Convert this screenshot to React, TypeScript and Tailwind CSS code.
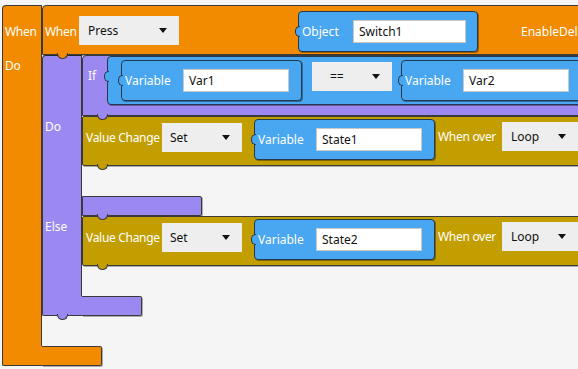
import React from "react";

const OR = "bg-[#f38b00]";
const PU = "bg-[#9b88f0]";
const BL = "bg-[#49a6f1]";
const MU = "bg-[#c39e00]";

function Caret() {
  return (
    <svg width="8" height="5" viewBox="0 0 8 5" className="shrink-0">
      <path d="M0 0H8L4 5Z" fill="#111" />
    </svg>
  );
}

function Dropdown({ label, cls }: { label: string; cls: string }) {
  return (
    <div className={`flex items-center justify-between h-[29px] bg-[#eeeeee] text-[#111] pr-[12px] shrink-0 ${cls}`}>
      <span>{label}</span>
      <Caret />
    </div>
  );
}

function Input({ value, cls }: { value: string; cls: string }) {
  return (
    <div className={`h-[23px] bg-white border border-[#c8c8c8] pl-[5px] flex items-center text-[#111] shrink-0 ${cls}`}>
      {value}
    </div>
  );
}

function LeftBump({ bg, border }: { bg: string; border: string }) {
  return (
    <div className={`absolute right-full top-[14px] -mr-[1px] w-[5px] h-[11px] rounded-l-full border border-r-0 z-10 ${bg} ${border}`} />
  );
}

function BottomBump({ bg, left }: { bg: string; left: string }) {
  return (
    <div className={`absolute top-full -mt-[1px] w-[11px] h-[6px] rounded-b-full border border-t-0 border-[#3a3a3a] z-10 ${bg} ${left}`} />
  );
}

function VariableBlock({ value, cls }: { value: string; cls: string }) {
  return (
    <div className={`relative flex items-center w-[181px] h-[41px] ${BL} border border-[#25384d] rounded-[4px] pl-[3px] shadow-[1px_1px_0_rgba(0,0,0,0.35)] shrink-0 ${cls}`}>
      <LeftBump bg={BL} border="border-[#25384d]" />
      <span className="w-[58px] shrink-0 text-white whitespace-nowrap">Variable</span>
      <Input value={value} cls="w-[106px]" />
    </div>
  );
}

function ValueChange({ state }: { state: string }) {
  return (
    <div className={`relative flex items-start w-[540px] h-[50px] ${MU} border border-[#3a3a3a] rounded-[2px] pl-[3px] shadow-[1px_1px_0_rgba(0,0,0,0.3)]`}>
      <span className="w-[76px] shrink-0 mt-[13px] text-white leading-[16px] whitespace-nowrap tracking-[-0.3px]">Value Change</span>
      <Dropdown label="Set" cls="w-[80px] pl-[8px] mt-[6px]" />
      <VariableBlock value={state} cls="ml-[12px] mt-[2px]" />
      <span className="ml-[3px] w-[64px] shrink-0 mt-[12px] text-white leading-[16px] whitespace-nowrap tracking-[-0.3px]">When over</span>
      <Dropdown label="Loop" cls="w-[76px] pl-[9px] mt-[5px]" />
      <BottomBump bg={MU} left="left-[14px]" />
    </div>
  );
}

export default function App() {
  return (
    <div className="w-[578px] h-[369px] overflow-hidden bg-[#f5f5f5] pl-[2px] pt-[5px] text-[12px] font-['Noto_Sans','Open_Sans',sans-serif] leading-[16px]">
      <div className="flex flex-col w-max">
        <div className="flex">
          {/* Outer orange column */}
          <div className={`w-[40px] ${OR} border-l border-t border-r border-[#3a3a3a] rounded-tl-[4px] flex flex-col text-white pl-[2px] tracking-[-0.3px]`}>
            <span className="mt-[18px]">When</span>
            <span className="mt-[18px]">Do</span>
          </div>
          <div className="flex flex-col pb-[30px]">
            {/* Top trigger bar */}
            <div className={`relative flex items-start w-[600px] h-[50px] ${OR} border border-[#3a3a3a] rounded-tl-[4px] pl-[2px] shadow-[1px_1px_0_rgba(0,0,0,0.3)]`}>
              <span className="w-[34px] shrink-0 mt-[18px] text-white tracking-[-0.3px]">When</span>
              <Dropdown label="Press" cls="w-[100px] pl-[9px] mt-[10px]" />
              <div className={`relative ml-[119px] mt-[5px] flex items-center w-[180px] h-[41px] shrink-0 ${BL} border border-[#25384d] rounded-[4px] pl-[3px] shadow-[1px_1px_0_rgba(0,0,0,0.35)]`}>
                <LeftBump bg={BL} border="border-[#25384d]" />
                <span className="w-[51px] shrink-0 text-white">Object</span>
                <Input value="Switch1" cls="w-[113px]" />
              </div>
              <span className="ml-[43px] mt-[18px] text-white whitespace-nowrap">EnableDelay</span>
              <BottomBump bg={OR} left="left-[14px]" />
            </div>

            {/* Purple If block */}
            <div className="flex flex-col">
              <div className="flex">
                <div className={`w-[40px] ${PU} border-l border-t border-r border-[#3a3a3a] rounded-tl-[4px] flex flex-col text-white pl-[2px]`}>
                  <span className="mt-[63px]">Do</span>
                  <span className="mt-[84px]">Else</span>
                </div>
                <div className="flex flex-col pb-[30px]">
                  {/* If row */}
                  <div className={`relative flex items-start w-[540px] h-[61px] ${PU} border border-[#3a3a3a] rounded-tl-[4px] pl-[5px] shadow-[1px_1px_0_rgba(0,0,0,0.3)]`}>
                    <span className="w-[19px] shrink-0 mt-[12px] text-white">If</span>
                    <div className={`relative flex items-start w-[520px] h-[49px] ${BL} border border-[#25384d] rounded-[4px] pl-[13px] shrink-0 shadow-[1px_1px_0_rgba(0,0,0,0.35)]`}>
                      <LeftBump bg={BL} border="border-[#25384d]" />
                      <VariableBlock value="Var1" cls="mt-[3px]" />
                      <Dropdown label="==" cls="w-[80px] pl-[18px] ml-[10px] mt-[5px]" />
                      <VariableBlock value="Var2" cls="ml-[9px] mt-[3px]" />
                    </div>
                    <BottomBump bg={PU} left="left-[14px]" />
                  </div>
                  <ValueChange state="State1" />
                  <div className="h-[30px]" />
                  <div className={`relative w-[120px] h-[20px] ${PU} border border-[#3a3a3a] rounded-r-[2px] shadow-[1px_1px_0_rgba(0,0,0,0.3)]`}>
                    <BottomBump bg={PU} left="left-[14px]" />
                  </div>
                  <ValueChange state="State2" />
                </div>
              </div>
              <div className="flex">
                <div className={`w-[40px] h-[20px] ${PU} border-l border-b border-[#3a3a3a] rounded-bl-[2px] relative`}>
                  <BottomBump bg={PU} left="left-[14px]" />
                </div>
                <div className={`w-[60px] h-[20px] ${PU} border-t border-r border-b border-[#3a3a3a] rounded-r-[2px] shadow-[1px_1px_0_rgba(0,0,0,0.3)]`} />
              </div>
            </div>
          </div>
        </div>
        <div className="flex">
          <div className={`w-[40px] h-[20px] ${OR} border-l border-b border-[#3a3a3a] rounded-bl-[2px]`} />
          <div className={`w-[60px] h-[20px] ${OR} border-t border-r border-b border-[#3a3a3a] rounded-r-[2px] shadow-[1px_1px_0_rgba(0,0,0,0.3)]`} />
        </div>
      </div>
    </div>
  );
}
